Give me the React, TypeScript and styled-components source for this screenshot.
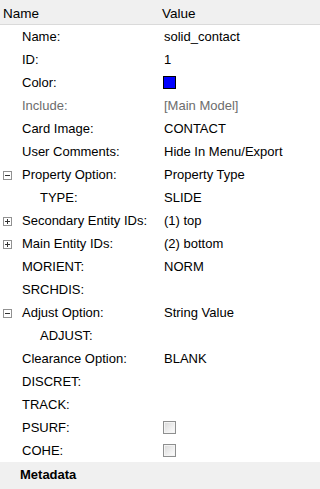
import styled, { createGlobalStyle } from 'styled-components';

type Row = {
  label: string;
  value?: string;
  level?: 0 | 1;
  toggle?: 'open' | 'closed';
  muted?: boolean;
  kind?: 'text' | 'color' | 'check';
};

const rows: Row[] = [
  { label: 'Name:', value: 'solid_contact' },
  { label: 'ID:', value: '1' },
  { label: 'Color:', kind: 'color' },
  { label: 'Include:', value: '[Main Model]', muted: true },
  { label: 'Card Image:', value: 'CONTACT' },
  { label: 'User Comments:', value: 'Hide In Menu/Export' },
  { label: 'Property Option:', value: 'Property Type', toggle: 'open' },
  { label: 'TYPE:', value: 'SLIDE', level: 1 },
  { label: 'Secondary Entity IDs:', value: '(1) top', toggle: 'closed' },
  { label: 'Main Entity IDs:', value: '(2) bottom', toggle: 'closed' },
  { label: 'MORIENT:', value: 'NORM' },
  { label: 'SRCHDIS:' },
  { label: 'Adjust Option:', value: 'String Value', toggle: 'open' },
  { label: 'ADJUST:', level: 1 },
  { label: 'Clearance Option:', value: 'BLANK' },
  { label: 'DISCRET:' },
  { label: 'TRACK:' },
  { label: 'PSURF:', kind: 'check' },
  { label: 'COHE:', kind: 'check' },
];

const Toggle: React.FC<{ open: boolean }> = ({ open }) => (
  <ToggleBox width="9" height="9" viewBox="0 0 9 9">
    <rect x="0.5" y="0.5" width="8" height="8" fill="#fff" stroke="#919191" />
    <line x1="2" y1="4.5" x2="7" y2="4.5" stroke="#333" />
    {!open && <line x1="4.5" y1="2" x2="4.5" y2="7" stroke="#333" />}
  </ToggleBox>
);

const App: React.FC = () => {
  return (
    <>
      <GlobalStyle />
      <Panel>
        <Header>
          <HeadCell>Name</HeadCell>
          <HeadCell $value>Value</HeadCell>
        </Header>
        {rows.map((r) => (
          <PropRow key={r.label}>
            <LabelCell $level={r.level ?? 0} $muted={r.muted}>
              {r.toggle && <Toggle open={r.toggle === 'open'} />}
              {r.label}
            </LabelCell>
            <ValueCell $muted={r.muted}>
              {r.kind === 'color' && <Swatch />}
              {r.kind === 'check' && <CheckBox />}
              {r.value}
            </ValueCell>
          </PropRow>
        ))}
        <Section>Metadata</Section>
      </Panel>
    </>
  );
};

export default App;

const GlobalStyle = createGlobalStyle`
  html, body {
    margin: 0;
    padding: 0;
    background: #fff;
  }
  body {
    font-family: "Liberation Sans", Arial, sans-serif;
    font-size: 13px;
    color: #000;
  }
`;

const Panel = styled.div`
  width: 320px;
  height: 489px;
  display: flex;
  flex-direction: column;
  overflow: hidden;
`;

const Header = styled.div`
  display: grid;
  grid-template-columns: 160px 1fr;
  height: 24px;
  align-items: center;
  background: #f0f0f0;
  border-bottom: 1px solid #dadada;
  font-size: 13.5px;
`;

const HeadCell = styled.div<{ $value?: boolean }>`
  padding-left: ${({ $value }) => ($value ? '2px' : '3px')};
  padding-top: 2px;
`;

const PropRow = styled.div`
  display: grid;
  grid-template-columns: 160px 1fr;
  height: 23px;
  align-items: center;
`;

const LabelCell = styled.div<{ $level: number; $muted?: boolean }>`
  position: relative;
  padding-left: ${({ $level }) => ($level ? 40 : 22)}px;
  color: ${({ $muted }) => ($muted ? '#6d6d6d' : '#000')};
  white-space: nowrap;
`;

const ToggleBox = styled.svg`
  position: absolute;
  left: 3px;
  top: 50%;
  margin-top: -4px;
`;

const ValueCell = styled.div<{ $muted?: boolean }>`
  display: flex;
  align-items: center;
  padding-left: 4px;
  color: ${({ $muted }) => ($muted ? '#6d6d6d' : '#000')};
  white-space: nowrap;
`;

const Swatch = styled.span`
  display: inline-block;
  width: 11px;
  height: 11px;
  background: #0000ff;
  border: 1px solid #000;
  margin-left: -1px;
`;

const CheckBox = styled.span`
  display: inline-block;
  box-sizing: border-box;
  width: 13px;
  height: 13px;
  margin-left: -1px;
  border: 1px solid #8e8f8f;
  background: linear-gradient(135deg, #d8d8d8 0%, #f0f0f0 60%, #fdfdfd 100%);
  box-shadow: inset 0 0 0 1px #f4f4f4;
`;

const Section = styled.div`
  flex: 1;
  background: #f0f0f0;
  padding: 5px 0 0 20px;
  font-weight: bold;
`;
